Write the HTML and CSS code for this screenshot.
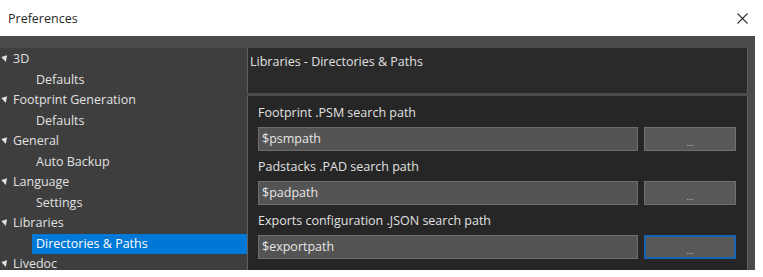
FILE: index.html
```html
<!DOCTYPE html>
<html>
  <head>
    <title>Preferences</title>
    <link rel="stylesheet" href="styles.css">
  </head>
  <body>
    <div class="title-bar">
      <p class="title">Preferences</p>
      <svg class="close-button" width="11" height="11" viewBox="0 0 11 11">
        <path d="M0.5 0.5 L10.5 10.5 M10.5 0.5 L0.5 10.5" stroke="rgb(50, 50, 50)" stroke-width="1.1" fill="none"/>
      </svg>
    </div>

    <div class="frame">
      <div class="tree">
        <div class="tree-item top"><span class="arrow"></span>3D</div>
        <div class="tree-item child">Defaults</div>
        <div class="tree-item top"><span class="arrow"></span>Footprint Generation</div>
        <div class="tree-item child">Defaults</div>
        <div class="tree-item top"><span class="arrow"></span>General</div>
        <div class="tree-item child">Auto Backup</div>
        <div class="tree-item top"><span class="arrow"></span>Language</div>
        <div class="tree-item child">Settings</div>
        <div class="tree-item top"><span class="arrow"></span>Libraries</div>
        <div class="tree-item child selected">Directories &amp; Paths</div>
        <div class="tree-item top"><span class="arrow"></span>Livedoc</div>
      </div>

      <div class="page">
        <div class="page-header">Libraries - Directories &amp; Paths</div>

        <div class="page-content">
          <p class="field-label">Footprint .PSM search path</p>
          <div class="field-row">
            <div class="path-input">$psmpath</div>
            <button class="browse-button">...</button>
          </div>

          <p class="field-label">Padstacks .PAD search path</p>
          <div class="field-row">
            <div class="path-input">$padpath</div>
            <button class="browse-button">...</button>
          </div>

          <p class="field-label">Exports configuration .JSON search path</p>
          <div class="field-row">
            <div class="path-input">$exportpath</div>
            <button class="browse-button focused">...</button>
          </div>
        </div>
      </div>
    </div>
  </body>
</html>
```

FILE: styles.css
```css
body {
  margin: 0;
  background-color: white;
  font-family: "Open Sans", "Noto Sans", sans-serif;
  font-size: 12.5px;
}

.title-bar {
  height: 36px;
  display: flex;
  align-items: center;
  justify-content: space-between;
  padding: 0 15px 0 8px;
}

.title {
  margin: 0;
  color: rgb(40, 40, 40);
  font-size: 12.5px;
}

.frame {
  width: 748px;
  height: 222px;
  padding: 12px 7px 0 0;
  background-color: rgb(75, 75, 75);
  display: grid;
  grid-template-columns: 247px 1fr;
}

.tree {
  background-color: rgb(62, 62, 62);
  color: rgb(225, 225, 225);
  padding-top: 1px;
}

.tree-item {
  height: 20.5px;
  line-height: 20.5px;
  white-space: nowrap;
}

.tree-item.top {
  padding-left: 2px;
}

.tree-item.child {
  margin-left: 32px;
  padding-left: 4px;
}

.tree-item.selected {
  background-color: rgb(0, 120, 215);
  color: white;
}

.arrow {
  display: inline-block;
  width: 0;
  height: 0;
  border-left: 3px solid transparent;
  border-right: 3px solid transparent;
  border-top: 6px solid rgb(225, 225, 225);
  margin-right: 5px;
  vertical-align: 1px;
  transform: rotate(-15deg);
}

.page {
  display: flex;
  flex-direction: column;
  gap: 3px;
}

.page-header {
  height: 45px;
  background-color: rgb(42, 42, 42);
  border-left: 1px solid rgb(95, 95, 95);
  border-right: 1px solid rgb(95, 95, 95);
  color: rgb(225, 225, 225);
  padding: 5px 0 0 2px;
  box-sizing: border-box;
}

.page-content {
  flex: 1;
  background-color: rgb(38, 38, 38);
  border-left: 1px solid rgb(95, 95, 95);
  border-right: 1px solid rgb(95, 95, 95);
  padding: 7px 11px 0 10px;
  margin-bottom: 2px;
}

.field-label {
  margin: 0;
  height: 20px;
  line-height: 20px;
  color: rgb(225, 225, 225);
}

.field-row {
  display: flex;
  gap: 6px;
  margin: 4px 0 6px;
}

.path-input {
  flex: 1;
  height: 22px;
  line-height: 22px;
  padding-left: 3px;
  background-color: rgb(84, 84, 84);
  border: 1px solid rgb(108, 108, 108);
  color: rgb(230, 230, 230);
}

.browse-button {
  width: 92px;
  height: 24px;
  background-color: rgb(88, 88, 88);
  border: 1px solid rgb(112, 112, 112);
  color: rgb(200, 200, 200);
  font-family: "Open Sans", sans-serif;
  font-size: 9px;
  padding: 6px 0 0;
}

.browse-button.focused {
  border: 2px solid rgb(22, 100, 180);
}
```
